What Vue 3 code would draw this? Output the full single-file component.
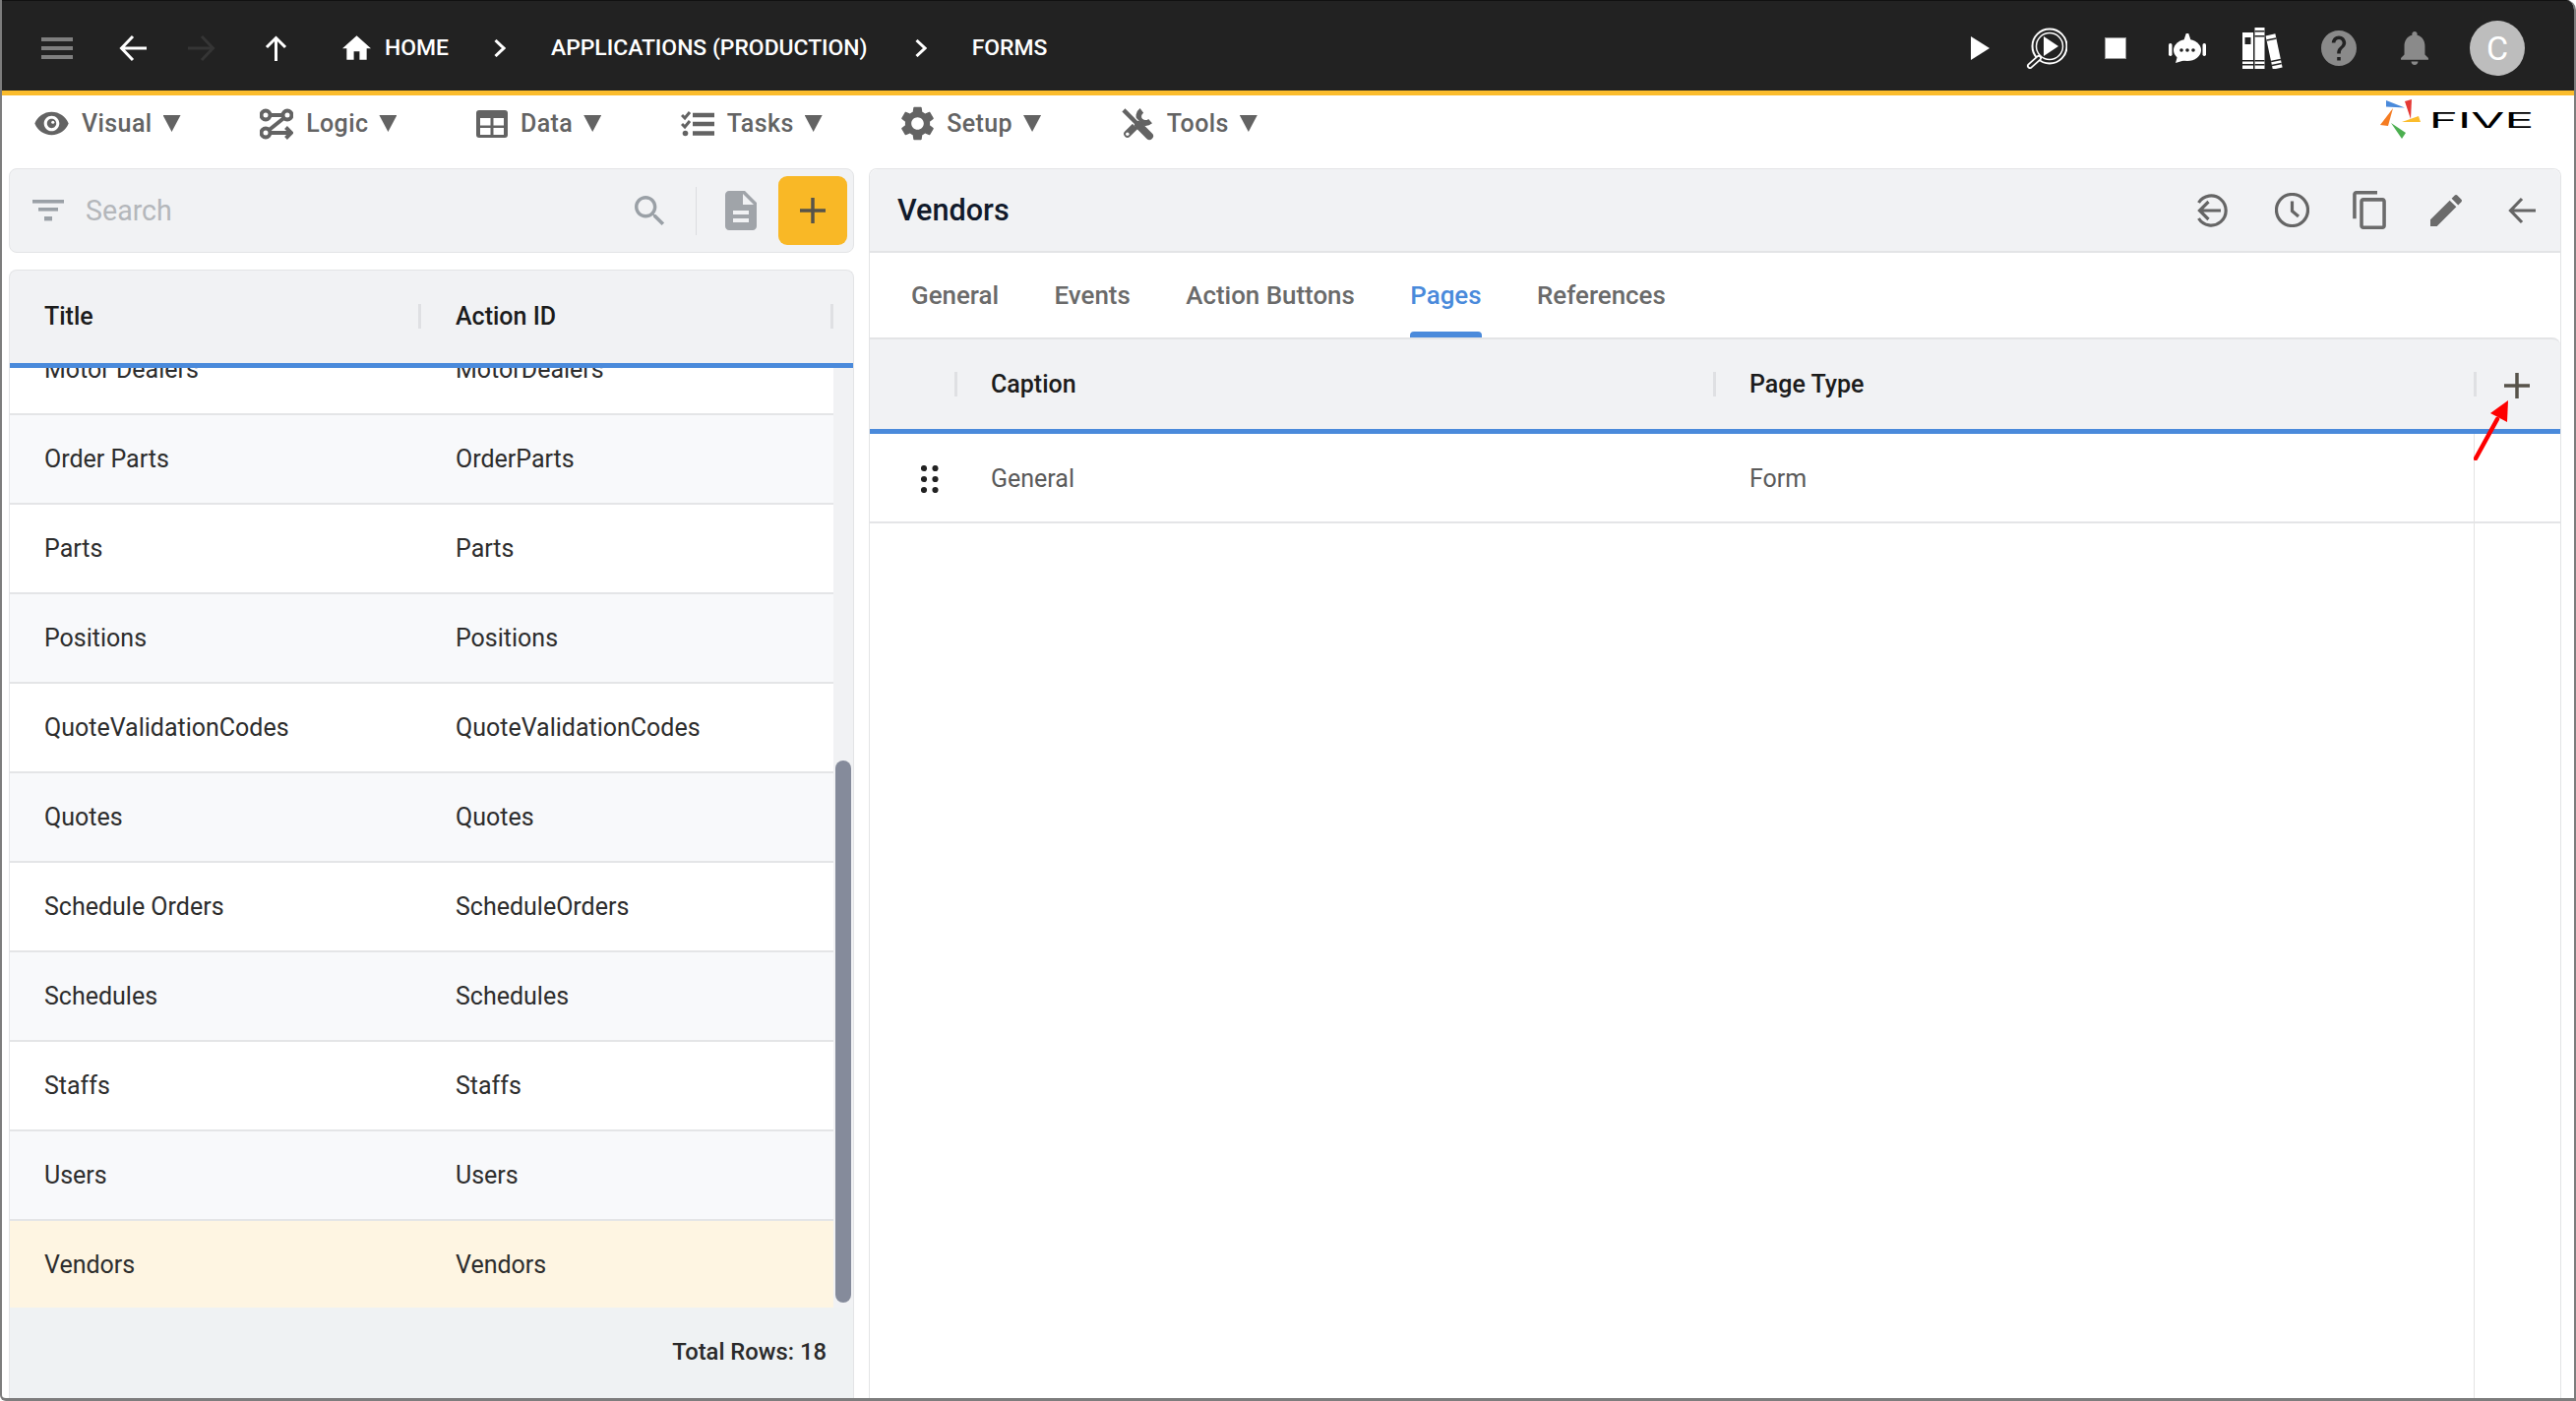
<script setup>
const rows = [
  ['Motor Dealers', 'MotorDealers'],
  ['Order Parts', 'OrderParts'],
  ['Parts', 'Parts'],
  ['Positions', 'Positions'],
  ['QuoteValidationCodes', 'QuoteValidationCodes'],
  ['Quotes', 'Quotes'],
  ['Schedule Orders', 'ScheduleOrders'],
  ['Schedules', 'Schedules'],
  ['Staffs', 'Staffs'],
  ['Users', 'Users'],
  ['Vendors', 'Vendors'],
]
const tabs = ['General', 'Events', 'Action Buttons', 'Pages', 'References']
</script>

<template>
  <div class="frame">
    <header class="topbar">
      <svg class="i-menu" viewBox="0 0 32 22"><rect y="0" width="32" height="4" /><rect y="9" width="32" height="4" /><rect y="18" width="32" height="4" /></svg>
      <svg class="i-back" viewBox="0 0 28 28"><path d="M28 14H3M14 2L2.500 14L14 26" /></svg>
      <svg class="i-fwd" viewBox="0 0 28 28"><path d="M0 14H25M14 2L25.500 14L14 26" /></svg>
      <svg class="i-up" viewBox="0 0 23 26"><path d="M11.500 26V3M2 12L11.500 2.500L21 12" /></svg>
      <svg class="i-home" viewBox="2 3 20 17"><path d="M10 20v-6h4v6h5v-8h3L12 3 2 12h3v8z" /></svg>
      <span class="crumb c-home">HOME</span>
      <svg class="i-chev c1" viewBox="0 0 12 18"><path d="M1.500 1L10 9L1.500 17" /></svg>
      <span class="crumb c-app">APPLICATIONS (PRODUCTION)</span>
      <svg class="i-chev c2" viewBox="0 0 12 18"><path d="M1.500 1L10 9L1.500 17" /></svg>
      <span class="crumb c-forms">FORMS</span>

      <div class="top-right">
        <svg class="r-play" viewBox="0 0 19 24"><polygon points="0,0 19,12 0,24" /></svg>
        <svg class="r-mag" viewBox="0 0 42 42">
          <circle cx="24" cy="19" r="17.500" class="ring" />
          <circle cx="24" cy="19" r="13.500" class="ring thin" />
          <polygon points="18,9 33,19 18,29" class="solid" />
          <path d="M13 31L4 39" class="handle" />
          <path d="M13 31L4 39" class="handle-in" />
        </svg>
        <svg class="r-stop" viewBox="0 0 22 22"><rect width="22" height="22" class="stop-o" /><rect x="1" y="1" width="20" height="20" class="solid" /></svg>
        <svg class="r-bot" viewBox="0 0 38 30">
          <path d="M17 7L19 1L21 7Z" class="solid" />
          <ellipse cx="19" cy="17" rx="14" ry="11" class="solid" />
          <rect x="0" y="10" width="3.500" height="13" rx="1.700" class="solid" />
          <rect x="34.500" y="10" width="3.500" height="13" rx="1.700" class="solid" />
          <polygon points="9,23 7,30 17,27" class="solid" />
          <circle cx="13" cy="17" r="1.800" class="dot" /><circle cx="19" cy="17" r="1.800" class="dot" /><circle cx="25" cy="17" r="1.800" class="dot" />
        </svg>
        <svg class="r-books" viewBox="0 0 41 42">
          <rect x="0" y="5" width="11" height="37" class="solid" />
          <rect x="2.500" y="10" width="6" height="7" class="dot" />
          <rect x="0" y="33" width="11" height="1.500" class="dot" />
          <rect x="0" y="37" width="11" height="1.500" class="dot" />
          <rect x="12.500" y="0" width="10" height="42" class="solid" />
          <rect x="12.500" y="3" width="10" height="1.500" class="dot" />
          <rect x="12.500" y="8" width="10" height="1.500" class="dot" />
          <rect x="12.500" y="33" width="10" height="1.500" class="dot" />
          <rect x="12.500" y="37" width="10" height="1.500" class="dot" />
          <g transform="rotate(-12 32 24)">
            <rect x="27" y="7" width="10" height="35" class="solid" />
            <rect x="27" y="11" width="10" height="1.500" class="dot" />
            <rect x="27" y="33" width="10" height="1.500" class="dot" />
            <rect x="27" y="37" width="10" height="1.500" class="dot" />
          </g>
        </svg>
        <svg class="r-help" viewBox="2 2 20 20"><path d="M12 2C6.480 2 2 6.480 2 12s4.480 10 10 10 10-4.480 10-10S17.520 2 12 2zm1 17h-2v-2h2v2zm2.070-7.750l-.9.920C13.450 12.900 13 13.500 13 15h-2v-.5c0-1.100.45-2.100 1.170-2.830l1.240-1.260c.37-.36.59-.86.59-1.410 0-1.100-.9-2-2-2s-2 .9-2 2H8c0-2.210 1.790-4 4-4s4 1.790 4 4c0 .88-.36 1.680-.93 2.250z" /></svg>
        <svg class="r-bell" viewBox="4 2.500 16 19.500"><path d="M12 22c1.100 0 2-.9 2-2h-4c0 1.100.9 2 2 2zm6-6v-5c0-3.070-1.630-5.640-4.500-6.320V4c0-.83-.67-1.500-1.500-1.500s-1.500.67-1.500 1.500v.68C7.640 5.360 6 7.920 6 11v5l-2 2v1h16v-1l-2-2z" /></svg>
        <div class="avatar">C</div>
      </div>
    </header>

    <nav class="toolbar">
      <div class="tool">
        <svg class="t-eye" viewBox="1 4 22 16"><path d="M12 4.500C7 4.500 2.730 7.610 1 12c1.730 4.390 6 7.500 11 7.500s9.270-3.110 11-7.500c-1.730-4.390-6-7.500-11-7.500zM12 17c-2.760 0-5-2.240-5-5s2.240-5 5-5 5 2.240 5 5-2.240 5-5 5zm0-8c-1.660 0-3 1.340-3 3s1.340 3 3 3 3-1.340 3-3-1.340-3-3-3z" /><circle cx="12.800" cy="11.200" r="1" class="glint" /></svg>
        <span>Visual</span><i class="caret"></i>
      </div>
      <div class="tool">
        <svg class="t-logic" viewBox="0 0 34 32">
          <circle cx="6" cy="7" r="4.500" /><circle cx="28" cy="7" r="4.500" /><circle cx="6" cy="25" r="4.500" />
          <path d="M10.500 7H23.500M24.500 10L9.500 22M10.500 25H32M26.500 19.500L32 25L26.500 30.500" />
        </svg>
        <span>Logic</span><i class="caret"></i>
      </div>
      <div class="tool">
        <svg class="t-data" viewBox="0 0 32 28">
          <rect width="32" height="28" rx="3" class="fill" />
          <rect x="4" y="8" width="10.500" height="7.500" class="blank" /><rect x="17.500" y="8" width="10.500" height="7.500" class="blank" />
          <rect x="4" y="18" width="10.500" height="7" class="blank" /><rect x="17.500" y="18" width="10.500" height="7" class="blank" />
        </svg>
        <span>Data</span><i class="caret"></i>
      </div>
      <div class="tool">
        <svg class="t-tasks" viewBox="0 0 34 26">
          <path d="M1 4L4 7L9 1M1 13L4 16L9 10" class="thin" />
          <circle cx="4.500" cy="22.500" r="2.800" class="fill" />
          <path d="M12 4H34M12 13H34M12 22.500H34" />
        </svg>
        <span>Tasks</span><i class="caret"></i>
      </div>
      <div class="tool">
        <svg class="t-gear" viewBox="2.600 2 18.800 20"><path d="M19.140 12.940c.04-.3.06-.61.06-.94 0-.32-.02-.64-.07-.94l2.030-1.580c.18-.14.23-.41.12-.61l-1.920-3.320c-.12-.22-.37-.29-.59-.22l-2.390.96c-.5-.38-1.030-.7-1.620-.94l-.36-2.540c-.04-.24-.24-.41-.48-.41h-3.840c-.24 0-.43.17-.47.41l-.36 2.540c-.59.24-1.130.57-1.620.94l-2.390-.96c-.22-.08-.47 0-.59.22L2.740 8.870c-.12.21-.08.47.12.61l2.030 1.580c-.05.3-.09.63-.09.94s.02.64.07.94l-2.030 1.580c-.18.14-.23.41-.12.61l1.920 3.320c.12.22.37.29.59.22l2.390-.96c.5.38 1.030.7 1.620.94l.36 2.540c.05.24.24.41.48.41h3.840c.24 0 .44-.17.47-.41l.36-2.540c.59-.24 1.130-.56 1.620-.94l2.390.96c.22.08.47 0 .59-.22l1.920-3.320c.12-.22.07-.47-.12-.61l-2.010-1.580zM12 15.600c-1.980 0-3.600-1.620-3.600-3.600s1.620-3.600 3.600-3.600 3.600 1.620 3.600 3.600-1.620 3.600-3.600 3.600z" /></svg>
        <span>Setup</span><i class="caret"></i>
      </div>
      <div class="tool">
        <svg class="t-tools" viewBox="0 0 35 35">
          <path d="M7 28L20 15" class="wr" />
          <path d="M22 3.500A8 8 0 0 0 20 14A8 8 0 0 0 31 14.500" class="wrh" />
          <circle cx="7" cy="28" r="1.800" class="hole" />
          <path d="M3 3L18 18" class="sd-gap" />
          <path d="M3 3L18 18" class="sd" />
          <path d="M18.500 18.500L30 30" class="sdh" />
        </svg>
        <span>Tools</span><i class="caret"></i>
      </div>
      <div class="logo">
        <svg class="logo-mark" viewBox="0 0 42 41">
          <polygon points="6,2 25,9.500 6,8.500" fill="#4a8adb" />
          <polygon points="25,3 32,1 31,21" fill="#e53935" />
          <polygon points="22,24 39,18 41,24" fill="#fbbc2c" />
          <polygon points="11,25 26,35 22,41" fill="#4caf50" />
          <polygon points="0,27 13,10 8,28" fill="#f57c22" />
        </svg>
        <span class="logo-text">FIVE</span>
      </div>
    </nav>

    <main class="main">
      <section class="left">
        <div class="search">
          <svg class="s-filter" viewBox="0 0 32 22"><rect width="32" height="3.600" /><rect x="6" y="8" width="20" height="3.600" /><rect x="12" y="17" width="8" height="4.400" /></svg>
          <span class="s-text">Search</span>
          <svg class="s-mag" viewBox="3 3 18 18"><path d="M15.500 14h-.79l-.28-.27C15.410 12.590 16 11.110 16 9.500 16 5.910 13.090 3 9.500 3S3 5.910 3 9.500 5.910 16 9.500 16c1.610 0 3.090-.59 4.230-1.570l.27.28v.79l5 4.990L20.490 19l-4.990-5zm-6 0C7.010 14 5 11.990 5 9.500S7.010 5 9.500 5 14 7.010 14 9.500 11.990 14 9.500 14z" /></svg>
          <span class="s-div"></span>
          <svg class="s-doc" viewBox="4 2 16 20"><path d="M14 2H6c-1.100 0-1.990.9-1.990 2L4 20c0 1.100.89 2 1.990 2H18c1.100 0 2-.9 2-2V8l-6-6zm2 16H8v-2h8v2zm0-4H8v-2h8v2zm-3-5V3.500L18.500 9H13z" /></svg>
          <button class="add"><svg viewBox="0 0 26 26"><path d="M13 0V26M0 13H26" /></svg></button>
        </div>

        <div class="list">
          <div class="list-head">
            <div class="lh-cell">Title<i class="sep"></i></div>
            <div class="lh-cell">Action ID<i class="sep"></i></div>
          </div>
          <div class="list-body">
            <div v-for="(r, i) in rows" :key="r[1]" class="row" :class="{ striped: i % 2 === 1, selected: r[1] === 'Vendors' }">
              <div class="cell">{{ r[0] }}</div>
              <div class="cell">{{ r[1] }}</div>
            </div>
            <div class="thumb"></div>
          </div>
          <div class="list-foot">Total Rows: 18</div>
        </div>
      </section>

      <section class="right">
        <div class="r-head">
          <h1>Vendors</h1>
          <div class="r-actions">
            <svg class="a-hist" viewBox="0 0 34 34"><path d="M4.500 9A15 15 0 1 1 4.500 25" /><path d="M5 17H27M14.500 8L5.500 17L14.500 26" /></svg>
            <svg class="a-clock" viewBox="0 0 35 35"><circle cx="17.500" cy="17.500" r="16" /><path d="M17.500 8.500V18.500L24 24" /></svg>
            <svg class="a-copy" viewBox="2 1 19 22"><path d="M16 1H4c-1.100 0-2 .9-2 2v14h2V3h12V1zm3 4H8c-1.100 0-2 .9-2 2v14c0 1.100.9 2 2 2h11c1.100 0 2-.9 2-2V7c0-1.100-.9-2-2-2zm0 16H8V7h11v14z" /></svg>
            <svg class="a-edit" viewBox="3 3 18 18"><path d="M3 17.250V21h3.750L17.810 9.940l-3.750-3.750L3 17.250zM20.710 7.040c.39-.39.39-1.020 0-1.410l-2.340-2.340c-.39-.39-1.020-.39-1.410 0l-1.830 1.830 3.750 3.750 1.830-1.830z" /></svg>
            <svg class="a-back" viewBox="0 0 28 28"><path d="M28 14H3M14 2L2.500 14L14 26" /></svg>
          </div>
        </div>

        <div class="tabs">
          <div v-for="t in tabs" :key="t" class="tab" :class="{ active: t === 'Pages' }">{{ t }}</div>
        </div>

        <div class="t-head">
          <div class="th"><i class="sep"></i></div>
          <div class="th">Caption<i class="sep"></i></div>
          <div class="th th-type">Page Type<i class="sep"></i></div>
          <div class="th th-add"><svg viewBox="0 0 26 26"><path d="M13 0V26M0 13H26" /></svg></div>
        </div>
        <div class="t-body">
          <div class="t-row">
            <div class="grip"><svg viewBox="0 0 18 28"><circle cx="3" cy="3" r="3.100" /><circle cx="14.500" cy="3" r="3.100" /><circle cx="3" cy="14" r="3.100" /><circle cx="14.500" cy="14" r="3.100" /><circle cx="3" cy="25" r="3.100" /><circle cx="14.500" cy="25" r="3.100" /></svg></div>
            <div class="td">General</div>
            <div class="td">Form</div>
          </div>
        </div>
        <svg class="arrow" viewBox="0 0 36 62">
          <path d="M2 60L24 20" />
          <polygon points="35,1 17,14 34,23" />
        </svg>
      </section>
    </main>
  </div>
</template>

<style>
html, body { margin: 0; background: #fff; }
</style>

<style scoped>
.frame {
  width: 2618px; height: 1424px; box-sizing: border-box;
  border-left: 2px solid #7d7d7d; border-right: 2px solid #7d7d7d; border-bottom: 3px solid #7d7d7d;
  border-radius: 0 10px 0 6px; overflow: hidden;
  display: flex; flex-direction: column;
  font-family: Roboto, "Liberation Sans", sans-serif; background: #fff;
}
svg { display: block; flex: none; }

.topbar {
  flex: none; height: 97px; box-sizing: border-box; padding-top: 4px;
  background: #222; border-top: 1px solid #111; border-bottom: 5px solid #fbbc2c;
  display: flex; align-items: center; color: #fff;
}
.topbar svg path { fill: none; stroke: #fff; stroke-width: 3; }
.i-menu { width: 32px; height: 22px; margin-left: 40px; fill: #7f7f7f; }
.i-back { width: 28px; height: 28px; margin-left: 47px; }
.i-fwd { width: 28px; height: 28px; margin-left: 42px; }
.topbar .i-fwd path { stroke: #353535; }
.i-up { width: 23px; height: 26px; margin-left: 50px; }
.i-home { width: 29px; height: 25px; margin-left: 56px; }
.topbar .i-home path { fill: #fff; stroke: none; }
.crumb { font-size: 22.900px; font-weight: 500; white-space: nowrap; }
.c-home { margin-left: 14px; }
.i-chev { width: 12px; height: 18px; }
.c1 { margin-left: 46px; }
.c-app { margin-left: 46px; }
.c2 { margin-left: 48px; }
.c-forms { margin-left: 46px; }

.top-right { margin-left: auto; padding-right: 50px; display: flex; align-items: center; }
.solid { fill: #fff; }
.dot { fill: #222; }
.r-play { width: 19px; height: 24px; fill: #fff; }
.r-mag { width: 42px; height: 42px; margin-left: 37px; }
.ring { fill: none; stroke: #fff; stroke-width: 2; }
.ring.thin { stroke-width: 1.500; }
.topbar .handle { stroke: #fff; stroke-width: 6; stroke-linecap: round; }
.topbar .handle-in { stroke: #222; stroke-width: 2.500; stroke-linecap: round; }
.r-stop { width: 22px; height: 22px; margin-left: 38px; }
.stop-o { fill: #9a9a9a; }
.r-bot { width: 38px; height: 30px; margin-left: 43px; }
.r-books { width: 41px; height: 42px; margin-left: 37px; }
.r-help { width: 36px; height: 36px; margin-left: 39px; }
.topbar .r-help path, .topbar .r-bell path { fill: #8a8a8a; stroke: none; }
.r-bell { width: 28px; height: 34px; margin-left: 45px; }
.avatar {
  width: 56px; height: 56px; margin-left: 42px; border-radius: 50%;
  background: #bdbdbd; color: #fff; font-size: 34px; display: flex; align-items: center; justify-content: center;
}

.toolbar {
  flex: none; height: 74px; box-sizing: border-box; padding: 0 0 17px 33px;
  display: flex; align-items: center; gap: 80.600px; color: #636363;
}
.tool { display: flex; align-items: center; gap: 13px; font-size: 25px; font-weight: 500; letter-spacing: 0.400px; }
.tool svg { fill: #636363; }
.tool .glint { fill: #fff; }
.caret { width: 18px; height: 17px; margin-left: -2px; background: #636363; clip-path: polygon(0 0, 100% 0, 50% 100%); }
.t-eye { width: 35px; height: 25px; }
.t-logic { width: 34px; height: 32px; }
.tool .t-logic { fill: none; stroke: #636363; stroke-width: 4; }
.t-data { width: 32px; height: 28px; }
.t-data .fill { fill: #636363; }
.t-data .blank { fill: #fff; }
.t-tasks { width: 34px; height: 26px; }
.tool .t-tasks path { fill: none; stroke: #636363; stroke-width: 4.500; }
.tool .t-tasks path.thin { stroke-width: 3; }
.t-gear { width: 33px; height: 35px; }
.t-tools { width: 34px; height: 34px; }
.tool .t-tools path { fill: none; stroke: #636363; }
.tool .t-tools .wr { stroke-width: 7.500; stroke-linecap: round; }
.tool .t-tools .wrh { stroke-width: 6; }
.tool .t-tools .sd { stroke-width: 4.500; }
.tool .t-tools .sd-gap { stroke: #fff; stroke-width: 7; }
.tool .t-tools .sdh { stroke-width: 8; stroke-linecap: round; }
.tool .t-tools .hole { fill: #fff; }
.logo { margin-left: auto; margin-bottom: 11px; padding-right: 44px; display: flex; align-items: center; }
.logo-mark { width: 42px; height: 41px; }
.logo-text {
  margin-left: 10px; width: 101px; display: block; font-family: Inter, sans-serif; font-size: 22px; line-height: 22px; font-weight: 400; color: #000;
  text-indent: -1px; transform-origin: left center; transform: scaleX(2.250); margin-top: 3px;
}

.main { flex: 1; min-height: 0; display: flex; gap: 15px; padding: 0 13px 0 7px; }
.left { width: 859px; flex: none; display: flex; flex-direction: column; gap: 17px; }
.search {
  flex: none; height: 86px; box-sizing: border-box; background: #f1f2f4;
  border: 1px solid #e3e4e6; border-radius: 8px; display: flex; align-items: center; padding-left: 23px;
}
.s-filter { width: 32px; height: 22px; fill: #9aa0a6; }
.s-text { margin-left: 22px; font-size: 28.600px; color: #b4b7bb; }
.s-mag { width: 31px; height: 31px; margin-left: auto; fill: #9aa0a6; }
.s-div { width: 1px; height: 49px; background: #dcdde0; margin-left: 31px; }
.s-doc { width: 34px; height: 40px; margin-left: 28px; fill: #a0a4a9; }
.add {
  width: 70px; height: 70px; margin: 0 6px 0 21px; padding: 0; border: 0; border-radius: 9px;
  background: #f9b826; display: flex; align-items: center; justify-content: center;
}
.add svg { width: 26px; height: 26px; }
.add path, .th-add path { fill: none; stroke: #57534a; stroke-width: 3.500; }

.list {
  flex: 1; min-height: 0; display: flex; flex-direction: column; background: #f1f2f4;
  border: 1px solid #e3e4e6; border-bottom: 0; border-radius: 8px 8px 0 0; overflow: hidden;
}
.list-head {
  flex: none; height: 99px; box-sizing: border-box; padding-bottom: 2px;
  display: grid; grid-template-columns: 418px 1fr; border-bottom: 5px solid #4a8adb;
}
.lh-cell, .th {
  position: relative; display: flex; align-items: center; padding-left: 35px;
  font-size: 25px; font-weight: 500; color: #1c1c1c;
}
.sep { position: absolute; right: 0; top: 50%; margin-top: -12px; width: 3px; height: 25px; background: #dfe0e3; }
.lh-cell:last-child .sep { right: 20px; }
.list-body { flex: 1; min-height: 0; overflow: hidden; position: relative; padding-right: 20px; background: #f1f2f4; }
.row {
  height: 91px; box-sizing: border-box; display: grid; grid-template-columns: 418px 1fr;
  background: #fff; border-bottom: 2px solid #e4e5e7;
}
.row:first-child { margin-top: -43px; }
.row.striped { background: #f8f9fb; }
.row.selected { background: #fef5e2; border-bottom: 0; padding-bottom: 2px; }
.cell { display: flex; align-items: center; padding-left: 35px; font-size: 25px; color: #2d2d2d; }
.thumb { position: absolute; top: 399px; bottom: 5px; right: 2px; width: 16px; background: #858b9b; border-radius: 8px; }
.list-foot {
  flex: none; height: 92px; box-sizing: border-box; background: #eff2f3; padding: 0 27px 3px 0;
  display: flex; align-items: center; justify-content: flex-end;
  font-size: 23.800px; font-weight: 500; color: #2a2a2a;
}

.right {
  flex: 1; min-width: 0; position: relative; display: flex; flex-direction: column;
  border: 1px solid #e3e4e6; border-bottom: 0; border-radius: 8px 8px 0 0;
}
.r-head {
  flex: none; height: 85px; box-sizing: border-box; background: #f1f2f4; border-bottom: 2px solid #e3e4e6;
  display: flex; align-items: center; padding: 0 25px 0 28px; border-radius: 8px 8px 0 0;
}
h1 { margin: 0; font-size: 30.600px; font-weight: 500; color: #111a2b; }
.r-actions { margin-left: auto; display: flex; align-items: center; }
.r-actions svg { fill: none; stroke: #656565; stroke-width: 3.200; }
.a-hist { width: 34px; height: 34px; }
.a-clock { width: 35px; height: 35px; margin-left: 48px; }
.a-copy { width: 34px; height: 39px; margin-left: 44px; }
.r-actions .a-copy, .r-actions .a-edit { fill: #6b6b6b; stroke: none; }
.a-edit { width: 32px; height: 32px; margin-left: 45px; }
.a-back { width: 28px; height: 28px; margin-left: 47px; }
.tabs { flex: none; height: 86px; box-sizing: border-box; display: flex; align-items: center; gap: 56.500px; padding-left: 42px; }
.tab { position: relative; height: 100%; display: flex; align-items: center; font-size: 25.900px; font-weight: 500; color: #6a6a6a; }
.tab.active { color: #4a8adb; }
.tab.active::after { content: ""; position: absolute; left: 0; right: 0; bottom: 0; height: 6px; background: #4a8adb; border-radius: 4px 4px 0 0; }
.t-head {
  flex: none; height: 98px; box-sizing: border-box; background: #f1f2f4; padding-bottom: 1px;
  border-top: 2px solid #e3e4e6; border-bottom: 5px solid #4a8adb; border-radius: 0 8px 0 0;
  display: grid; grid-template-columns: 89px 771px 770px 1fr;
}
.t-head .th { padding-left: 34px; }
.th-type .sep { right: -3px; }
.t-head .th-add { padding-left: 31px; }
.th-add svg { width: 26px; height: 26px; margin-top: 3px; }
.t-body { flex: 1; min-height: 0; position: relative; }
.t-body::after { content: ""; position: absolute; top: 0; bottom: 0; left: 1630px; width: 1px; background: #e4e4e4; }
.t-row { height: 91px; box-sizing: border-box; padding-top: 2px; border-bottom: 2px solid #e4e5e7; display: grid; grid-template-columns: 89px 771px 1fr; }
.grip { display: flex; align-items: center; padding-left: 52px; }
.grip svg { width: 18px; height: 28px; fill: #222; }
.td { display: flex; align-items: center; padding-left: 34px; font-size: 25px; color: #5a5a5a; }
.arrow { position: absolute; left: 1630px; top: 234px; width: 36px; height: 62px; }
.arrow path { fill: none; stroke: #fe0000; stroke-width: 4.500; stroke-linecap: round; }
.arrow polygon { fill: #fe0000; }
</style>
